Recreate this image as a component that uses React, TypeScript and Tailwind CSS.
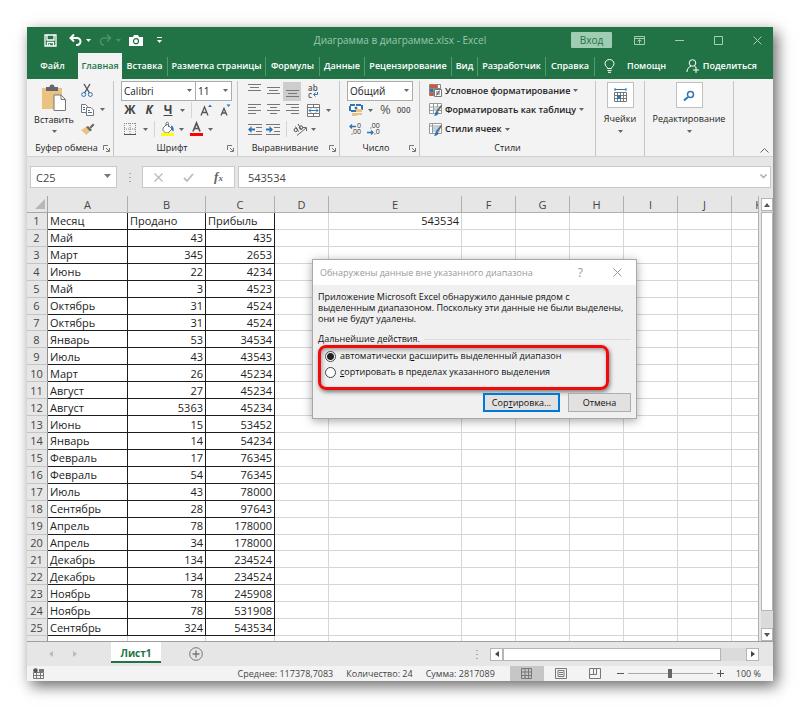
import type { ReactNode } from "react"

const tabs = [
  { name: "Вставка", width: "w-[46px]" },
  { name: "Разметка страницы", width: "w-[98px]" },
  { name: "Формулы", width: "w-[54px]" },
  { name: "Данные", width: "w-[45px]" },
  { name: "Рецензирование", width: "w-[87px]" },
  { name: "Вид", width: "w-[26px]" },
  { name: "Разработчик", width: "w-[68px]" },
  { name: "Справка", width: "w-[49px]" },
]

const rows = [
  ["Месяц", "Продано", "Прибыль"],
  ["Май", "43", "435"],
  ["Март", "345", "2653"],
  ["Июнь", "22", "4234"],
  ["Май", "3", "4523"],
  ["Октябрь", "31", "4524"],
  ["Октябрь", "31", "4524"],
  ["Январь", "53", "34534"],
  ["Июль", "43", "43543"],
  ["Март", "26", "45234"],
  ["Август", "27", "45234"],
  ["Август", "5363", "45234"],
  ["Июнь", "15", "53452"],
  ["Январь", "14", "54234"],
  ["Февраль", "17", "76345"],
  ["Февраль", "54", "76345"],
  ["Июль", "43", "78000"],
  ["Сентябрь", "28", "97643"],
  ["Апрель", "78", "178000"],
  ["Апрель", "34", "178000"],
  ["Декабрь", "134", "234524"],
  ["Декабрь", "134", "234524"],
  ["Ноябрь", "78", "245908"],
  ["Ноябрь", "78", "531908"],
  ["Сентябрь", "324", "543534"],
]

const columns = [
  { name: "A", width: "w-[80px]" },
  { name: "B", width: "w-[78px]" },
  { name: "C", width: "w-[69px]" },
  { name: "D", width: "w-[54px]" },
  { name: "E", width: "w-[133px]" },
  { name: "F", width: "w-[54px]" },
  { name: "G", width: "w-[54px]" },
  { name: "H", width: "w-[54px]" },
  { name: "I", width: "w-[54px]" },
  { name: "J", width: "w-[54px]" },
  { name: "K", width: "w-[54px]" },
]

const emptyColumns = ["F", "G", "H", "I", "J", "K"]

function Svg({ w, h, children }: { w: number; h: number; children: ReactNode }) {
  return (
    <svg width={w} height={h} viewBox={`0 0 ${w} ${h}`} fill="none" className="shrink-0 overflow-visible" aria-hidden="true">
      {children}
    </svg>
  )
}

function Caret({ color = "#666" }: { color?: string }) {
  return (
    <Svg w={5} h={3}>
      <path d="M0 0h5L2.5 3z" fill={color} />
    </Svg>
  )
}

function IconButton({ label, className = "", children }: { label: string; className?: string; children: ReactNode }) {
  return (
    <button type="button" aria-label={label} className={`flex shrink-0 items-center justify-center ${className}`}>
      {children}
    </button>
  )
}

function Lines({ widths, align }: { widths: number[]; align: "start" | "center" | "end" }) {
  return (
    <Svg w={13} h={widths.length * 3}>
      {widths.map((w, i) => {
        const x = align === "start" ? 0 : align === "end" ? 13 - w : (13 - w) / 2
        return <rect key={i} x={x} y={i * 3} width={w} height={1} fill="#777" />
      })}
    </Svg>
  )
}

function Indent({ flip = false }: { flip?: boolean }) {
  return (
    <Svg w={14} h={11}>
      <path d="M0 .5h14M8 3.5h6M8 7.5h6M0 10.5h14" stroke="#777" />
      <path
        d={flip ? "M7 5.5 3.5 2v2.500H0v2h3.5V9z" : "M0 5.5 3.500 2v2.500H7v2H3.500V9z"}
        fill="#2e75b6"
      />
    </Svg>
  )
}

function Group({ title, className, launcher = true, children }: { title: string; className: string; launcher?: boolean; children: ReactNode }) {
  return (
    <section aria-label={title} className={`flex flex-col border-r border-[#c6c6c6] ${className}`}>
      <div className="h-[60px]">{children}</div>
      <div className="flex h-4 items-center pr-[3px] pl-[3px]">
        <span className="flex-1 text-center whitespace-nowrap">{title}</span>
        {launcher && (
          <IconButton label={`${title}: параметры`}>
            <Svg w={7} h={7}>
              <path d="M.5 5V.5H5M3 3l3 3M6.500 3v3.500H3" stroke="#777" />
            </Svg>
          </IconButton>
        )}
      </div>
    </section>
  )
}

function TitleBar() {
  return (
    <div className="grid h-[26px] grid-cols-[1fr_auto_1fr] items-center">
      <div className="flex items-center pl-[17px]">
        <IconButton label="Сохранить" className="mr-3">
          <Svg w={13} h={13}>
            <path d="M1 1h11v11H1zM3 1v5h7V1M3.500 12V8.500h6V12M5.500 10v2" stroke="#fff" strokeWidth="1.300" />
          </Svg>
        </IconButton>
        <IconButton label="Отменить" className="mr-[5px]">
          <Svg w={12} h={12}>
            <path d="M1.500 4H8a3.500 3.500 0 0 1 0 7H7M5 .5 1.500 4 5 7.500" stroke="#fff" strokeWidth="2" />
          </Svg>
        </IconButton>
        <Caret color="#fff" />
        <IconButton label="Вернуть" className="mr-[4px] ml-2">
          <Svg w={13} h={12}>
            <path d="M11.500 4H5a3.500 3.500 0 0 0 0 7M8 .5 11.500 4 8 7.500" stroke="#4d9169" strokeWidth="1.500" />
          </Svg>
        </IconButton>
        <Caret color="#4d9169" />
        <IconButton label="Снимок" className="ml-2">
          <Svg w={14} h={11}>
            <path d="M0 2h4l1-2h4l1 2h4v9H0z" fill="#fff" />
            <circle cx="7" cy="6.200" r="2.500" stroke="#217346" strokeWidth="1.200" />
          </Svg>
        </IconButton>
        <IconButton label="Настройка панели" className="ml-[14px]">
          <Svg w={5} h={6}>
            <path d="M0 .5h5" stroke="#fff" />
            <path d="M0 3h5L2.500 6z" fill="#fff" />
          </Svg>
        </IconButton>
      </div>
      <h1 className="text-[10px] whitespace-pre text-[#9bc7ae]">Диаграмма в диаграмме.xlsx - Excel</h1>
      <div className="flex items-center justify-end pr-[11px]">
        <button type="button" className="mr-[22px] h-4 w-[41px] rounded-[1px] bg-[#9fcdb3] text-[10px] leading-4 text-[#217346]">
          Вход
        </button>
        <IconButton label="Параметры ленты" className="mr-[30px]">
          <Svg w={11} h={9}>
            <path d="M.5.5h10v8H.5zM.5 2.500h10M5.500 7.500V4M3.500 5.500l2-2 2 2" stroke="#a6cfb7" />
          </Svg>
        </IconButton>
        <IconButton label="Свернуть" className="mr-[30px]">
          <Svg w={9} h={9}>
            <path d="M0 4.500h9" stroke="#a6cfb7" />
          </Svg>
        </IconButton>
        <IconButton label="Развернуть" className="mr-[30px]">
          <Svg w={9} h={9}>
            <path d="M.5.5h8v8h-8z" stroke="#a6cfb7" />
          </Svg>
        </IconButton>
        <IconButton label="Закрыть">
          <Svg w={9} h={9}>
            <path d="m.5.5 8 8m0-8-8 8" stroke="#a6cfb7" />
          </Svg>
        </IconButton>
      </div>
    </div>
  )
}

function TabBar() {
  return (
    <nav className="flex h-[26px] items-center text-[9px] font-semibold whitespace-nowrap text-white">
      <button type="button" className="h-full w-[51px]">
        Файл
      </button>
      <button type="button" className="h-full w-[44px] bg-[#f3f3f3] text-[#217346]">
        Главная
      </button>
      {tabs.map((tab) => (
        <button key={tab.name} type="button" className={`flex h-[19px] shrink-0 items-center justify-center border-r border-[#4f9a70] ${tab.width}`}>
          {tab.name}
        </button>
      ))}
      <button type="button" className="ml-[9px] flex items-center gap-3">
        <Svg w={11} h={14}>
          <path d="M3.500 9.500C3.500 8 1 7 1 4.700a4.500 4.200 0 0 1 9 0C10 7 7.500 8 7.500 9.500zM3.500 11.500h4M4 13.300h3" stroke="#fff" />
        </Svg>
        Помощн
      </button>
      <button type="button" className="ml-auto flex items-center gap-[3px] pr-4">
        <Svg w={14} h={14}>
          <circle cx="6.500" cy="4" r="3.300" stroke="#fff" />
          <path d="M1 13c0-3 1.500-5 4-5.700M8.500 7.300l1.500 1M7 11h6M10 8v6" stroke="#fff" />
        </Svg>
        Поделиться
      </button>
    </nav>
  )
}

function Ribbon() {
  return (
    <div className="flex h-[78px] border-b border-[#d2d2d2] bg-[#f3f3f3] pt-[2px] text-[9px] font-medium text-[#222]">
      <Group title="Буфер обмена" className="w-[87px]">
        <div className="flex">
          <button type="button" className="flex w-[54px] flex-col items-center pt-1">
            <Svg w={24} h={26}>
              <path d="M0 3h20v21H0z" fill="#eac282" />
              <path d="M4 2h3.500a2.500 2.500 0 0 1 5 0H16v4H4z" fill="#666" />
              <path d="M12 10h7l4.500 4.500V25.500H12z" fill="#fff" stroke="#777" />
              <path d="M19 10v4.500h4.500" stroke="#777" />
            </Svg>
            <span className="mt-[3px] leading-3">Вставить</span>
            <span className="mt-1">
              <Caret />
            </span>
          </button>
          <div className="flex flex-col">
            <IconButton label="Вырезать" className="h-[19px] w-[12px]">
              <Svg w={12} h={13}>
                <path d="M3 0l5.500 9M9 0 3.500 9" stroke="#555" strokeWidth="1.400" />
                <circle cx="2.700" cy="10.500" r="2" stroke="#2e75b6" />
                <circle cx="9.300" cy="10.500" r="2" stroke="#2e75b6" />
              </Svg>
            </IconButton>
            <IconButton label="Копировать" className="h-[19px] gap-[6px]">
              <Svg w={13} h={12}>
                <path d="M.5.5h4l2 2v6h-6z" fill="#fff" stroke="#777" />
                <path d="M5.500 3.500h4.500l2.500 2.500v5.500h-7z" fill="#fff" stroke="#777" />
                <path d="M7 6.500h2M7 8.500h4M2 3.500h2M2 5.500h2" stroke="#2e75b6" />
              </Svg>
              <Caret />
            </IconButton>
            <IconButton label="Формат по образцу" className="h-[19px] w-[14px]">
              <Svg w={14} h={12}>
                <path d="m0 7 5-3 4 4-3.500 4z" fill="#eac282" />
                <path d="m5 4 2-1 4 4-2 1.500zM8.500 4 12 .5 13.500 2 10 5.500z" fill="#666" />
              </Svg>
            </IconButton>
          </div>
        </div>
      </Group>

      <Group title="Шрифт" className="w-[124px]">
        <div className="flex h-[20px] pl-[7px] text-[10px]">
          <div className="relative">
            <select aria-label="Шрифт" className="h-5 w-[75px] appearance-none border border-[#ababab] bg-white pl-[2px] leading-4">
              <option>Calibri</option>
            </select>
            <span className="pointer-events-none absolute top-2 right-1">
              <Caret />
            </span>
          </div>
          <div className="relative -ml-px">
            <select aria-label="Размер шрифта" className="h-5 w-[37px] appearance-none border border-[#ababab] bg-white pl-[2px] leading-4">
              <option>11</option>
            </select>
            <span className="pointer-events-none absolute top-2 right-1">
              <Caret />
            </span>
          </div>
        </div>
        <div className="flex h-[18px] items-center pl-[10px] font-bold text-[#444]">
          <button type="button" className="w-3 text-[12px]">Ж</button>
          <button type="button" className="ml-2 w-[10px] text-[12px] italic">К</button>
          <button type="button" className="ml-2 w-3 text-[12px] underline">Ч</button>
          <span className="ml-[6px]">
            <Caret />
          </span>
          <span className="ml-[6px] h-4 w-px bg-[#d4d4d4]" />
          <IconButton label="Увеличить размер" className="ml-2">
            <Svg w={12} h={12}>
              <path d="M1 11.500 4.500 3 8 11.500M2 8.500h5" stroke="#555" strokeWidth="1.300" />
              <path d="m8 3 2-2.500L12 3z" fill="#2e75b6" />
            </Svg>
          </IconButton>
          <IconButton label="Уменьшить размер" className="ml-2">
            <Svg w={11} h={12}>
              <path d="M1 11.500 4 4.500l3 7M2 9h4" stroke="#555" strokeWidth="1.300" />
              <path d="m6.500.5h4L8.500 3z" fill="#2e75b6" />
            </Svg>
          </IconButton>
        </div>
        <div className="flex h-5 items-center pl-[10px]">
          <IconButton label="Границы" className="gap-[7px]">
            <Svg w={12} h={12}>
              <path d="M.5 0v11M6 0v11M11.500 0v11M0 .5h12M0 6h12" stroke="#888" strokeDasharray="1 1" />
              <path d="M0 11.500h12" stroke="#555" />
            </Svg>
            <Caret />
          </IconButton>
          <span className="ml-[6px] h-4 w-px bg-[#d4d4d4]" />
          <IconButton label="Цвет заливки" className="ml-[6px] gap-[5px]">
            <Svg w={13} h={14}>
              <path d="m2 6 4-4 5 5-4 4H4.500L2 8.500zM5 4V1.500a1.200 1.200 0 0 1 2.500 0V5" fill="#fff" stroke="#777" />
              <path d="M10 3.500c2 .5 3 2 2.500 6L10.500 8z" fill="#2e75b6" />
              <path d="M0 11h13v3H0z" fill="#ff0" />
            </Svg>
            <Caret />
          </IconButton>
          <IconButton label="Цвет текста" className="ml-[6px] gap-[5px]">
            <Svg w={13} h={14}>
              <path d="M3 9.500 6.500 1 10 9.500M4.200 6.500h4.600" stroke="#555" strokeWidth="1.700" />
              <path d="M0 11h13v3H0z" fill="#f00" />
            </Svg>
            <Caret />
          </IconButton>
        </div>
      </Group>

      <Group title="Выравнивание" className="w-[102px]">
        <div className="flex h-[20px] items-center pl-[10px]">
          <IconButton label="По верхнему краю" className="mb-[6px]">
            <Lines widths={[13, 9, 13]} align="center" />
          </IconButton>
          <IconButton label="По середине" className="ml-[6px]">
            <Lines widths={[13, 9, 13]} align="center" />
          </IconButton>
          <IconButton label="По нижнему краю" className="ml-[3px] h-[19px] w-[18px] bg-[#cdcdcd] pt-[6px]">
            <Lines widths={[13, 9, 13]} align="center" />
          </IconButton>
          <button type="button" aria-label="Перенести текст" className="ml-[7px] flex flex-col items-start text-[8px] leading-[7px] font-semibold text-[#555]">
            <span>ab</span>
            <span className="flex items-center gap-px">
              c
              <Svg w={5} h={5}>
                <path d="M4.500 0v2.500H1M2.500.5l-2 2 2 2" stroke="#2e75b6" />
              </Svg>
            </span>
          </button>
        </div>
        <div className="flex h-[18px] items-center pl-[10px]">
          <IconButton label="По левому краю">
            <Lines widths={[13, 8, 13, 8]} align="start" />
          </IconButton>
          <IconButton label="По центру" className="ml-[6px]">
            <Lines widths={[13, 7, 13, 7]} align="center" />
          </IconButton>
          <IconButton label="По правому краю" className="ml-[6px]">
            <Lines widths={[13, 8, 13, 8]} align="end" />
          </IconButton>
          <IconButton label="Объединить" className="ml-2 gap-[6px]">
            <Svg w={13} h={13}>
              <path d="M.5.5h12v12H.5zM.5 3.500h12M.5 9.500h12M6.500.5v3M6.500 9.500v3" fill="#fff" stroke="#777" />
              <path d="M2 6.500h9M4 4.500l-2 2 2 2M9 4.500l2 2-2 2" stroke="#2e75b6" />
            </Svg>
            <Caret />
          </IconButton>
        </div>
        <div className="flex h-5 items-center pl-[10px]">
          <IconButton label="Уменьшить отступ">
            <Indent />
          </IconButton>
          <IconButton label="Увеличить отступ" className="ml-1">
            <Indent flip />
          </IconButton>
          <span className="ml-[6px] h-4 w-px bg-[#d4d4d4]" />
          <IconButton label="Ориентация" className="ml-[6px] gap-1">
            <Svg w={14} h={13}>
              <circle cx="2.800" cy="7" r="1.700" stroke="#555" />
              <path d="M2.500 3.500 5.500 8.500M5 1l3.500 6" stroke="#555" />
              <circle cx="8" cy="4.500" r="1.700" stroke="#555" />
              <path d="M4 12.500 13 5M9.500 4.500h4V8" stroke="#666" />
            </Svg>
            <Caret />
          </IconButton>
        </div>
      </Group>

      <Group title="Число" className="w-[80px]">
        <div className="relative ml-[7px] h-5 w-[66px] text-[10px]">
          <select aria-label="Числовой формат" className="h-5 w-full appearance-none border border-[#ababab] bg-white pl-[2px] leading-4">
            <option>Общий</option>
          </select>
          <span className="pointer-events-none absolute top-2 right-1">
            <Caret />
          </span>
        </div>
        <div className="flex h-[18px] items-center pl-[9px]">
          <IconButton label="Финансовый формат" className="gap-[5px]">
            <Svg w={14} h={13}>
              <path d="M1 1h12v6H1z" fill="#fff" stroke="#2e75b6" strokeWidth="2" strokeDasharray="5 1" />
              <circle cx="7" cy="4" r="1.500" fill="#2e75b6" />
              <path d="M7 5h6v3H7zM7 9h6v2H7zM3 9h5v3H3z" fill="#eac282" />
            </Svg>
            <Caret />
          </IconButton>
          <button type="button" className="ml-[7px] text-[13px] text-[#555]">%</button>
          <button type="button" className="ml-[6px] text-[8px] font-semibold text-[#555]">000</button>
        </div>
        <div className="flex h-5 items-center gap-[6px] pl-[9px] text-[7px] leading-[6px] text-[#333]">
          <button type="button" aria-label="Увеличить разрядность" className="flex flex-col items-end">
            <span className="flex items-center gap-px">
              <Svg w={7} h={5}>
                <path d="M1 2.500h6M3 .5l-2 2 2 2" stroke="#2e75b6" strokeWidth="1.300" />
              </Svg>
              0
            </span>
            <span>,00</span>
          </button>
          <button type="button" aria-label="Уменьшить разрядность" className="flex flex-col items-end">
            <span>,00</span>
            <span className="flex items-center">
              <Svg w={7} h={5}>
                <path d="M0 2.500h6M4 .5l2 2-2 2" stroke="#2e75b6" strokeWidth="1.300" />
              </Svg>
              ,0
            </span>
          </button>
        </div>
      </Group>

      <Group title="Стили" className="w-[176px]" launcher={false}>
        <div className="flex flex-col pl-[9px]">
          <button type="button" className="flex h-[19px] items-center gap-[3px] whitespace-nowrap">
            <Svg w={13} h={13}>
              <path d="M.5.5h11v11H.5zM.5 4.500h11M.5 8.500h5M4.500.5v11M8.500.5v4" fill="#fff" stroke="#888" />
              <path d="M1 1h7v3H1zM1 9h3v3H1z" fill="#d65532" />
              <path d="M1 5h3v3H1z" fill="#2e75b6" />
              <path d="M5.500 5.500h7v7h-7z" fill="#fff" stroke="#777" />
              <path d="M7 8h4M7 10h4M10.500 6.500l-3 5" stroke="#444" strokeWidth=".8" />
            </Svg>
            <span className="font-semibold">Условное форматирование</span>
            <Caret />
          </button>
          <button type="button" className="flex h-[19px] items-center gap-[3px] whitespace-nowrap">
            <Svg w={13} h={13}>
              <path d="M.5.5h12v10H.5zM.5 4h12M.5 7.500h12M4.500.5v10M8.500.5v10" fill="#fff" stroke="#999" />
              <path d="M5 4h4v4H5z" fill="#b9d3ea" />
              <path d="m12 2 1 1-4 6-2-1z" fill="#666" />
              <path d="m7 8 3 2c-1 2-3 3-5 3 1-1 1-3 2-5z" fill="#2e75b6" />
            </Svg>
            <span className="font-semibold">Форматировать как таблицу</span>
            <Caret />
          </button>
          <button type="button" className="flex h-5 items-center gap-[3px] whitespace-nowrap">
            <Svg w={13} h={13}>
              <path d="M.5.5h12v10H.5zM.5 3h12M3.500.5v10" fill="#fff" stroke="#999" />
              <path d="M4 4h7v5H4z" fill="#b9d3ea" />
              <path d="m12 2 1 1-4 6-2-1z" fill="#666" />
              <path d="m7 8 3 2c-1 2-3 3-5 3 1-1 1-3 2-5z" fill="#2e75b6" />
            </Svg>
            <span className="font-semibold">Стили ячеек</span>
            <Caret />
          </button>
        </div>
      </Group>

      <div className="flex w-[49px] flex-col items-center border-r border-[#c6c6c6] pt-px">
        <button type="button" className="flex flex-col items-center">
          <span className="flex h-[26px] w-[27px] items-center justify-center border border-[#c0c0c0] bg-white">
            <Svg w={13} h={14}>
              <path d="M1 0v3M12 0v3M1 1.500h11" stroke="#2e75b6" />
              <path d="M.5 4.500h12v9H.5zM.5 7.500h12M.5 10.500h12M3.500 4.500v9M6.500 4.500v9M9.500 4.500v9" stroke="#777" />
              <path d="M3 7h4v4H3z" fill="#2e75b6" />
            </Svg>
          </span>
          <span className="mt-[5px] mb-[5px] leading-3">Ячейки</span>
          <Caret />
        </button>
      </div>
      <div className="flex w-[89px] flex-col items-center border-r border-[#c6c6c6] pt-px">
        <button type="button" className="flex flex-col items-center">
          <span className="flex h-[26px] w-[27px] items-center justify-center border border-[#c0c0c0] bg-white">
            <Svg w={12} h={11}>
              <circle cx="7.500" cy="4.500" r="3" stroke="#2e75b6" strokeWidth="1.500" />
              <path d="M5 7 1 10.500" stroke="#2e75b6" strokeWidth="2" />
            </Svg>
          </span>
          <span className="mt-[5px] mb-[5px] leading-3">Редактирование</span>
          <Caret />
        </button>
      </div>
      <IconButton label="Свернуть ленту" className="mt-auto mr-1 mb-[3px] ml-auto">
        <Svg w={9} h={5}>
          <path d="M.5 4.500l4-4 4 4" stroke="#666" />
        </Svg>
      </IconButton>
    </div>
  )
}

function FormulaBar() {
  return (
    <div className="flex h-[39px] shrink-0 items-start gap-1 pt-[9px] pr-[2px] pl-[3px] text-[11px] text-[#444]">
      <div className="relative">
        <input aria-label="Имя" defaultValue="C25" className="h-[22px] w-[87px] border border-[#c9c9c9] bg-white pl-[5px]" />
        <span className="pointer-events-none absolute top-2 right-[6px]">
          <Svg w={7} h={4}>
            <path d="M0 0h7L3.500 4z" fill="#777" />
          </Svg>
        </span>
      </div>
      <span className="flex h-[22px] w-[17px] items-center justify-center">
        <Svg w={2} h={9}>
          <path d="M0 0h2v1H0zM0 4h2v1H0zM0 8h2v1H0z" fill="#aaa" />
        </Svg>
      </span>
      <div className="flex h-[22px] w-[93px] items-center justify-around border border-[#c9c9c9] bg-white px-px">
        <IconButton label="Отмена ввода">
          <Svg w={9} h={9}>
            <path d="m.5.5 8 8m0-8-8 8" stroke="#bbb" strokeWidth="1.300" />
          </Svg>
        </IconButton>
        <IconButton label="Ввод">
          <Svg w={11} h={9}>
            <path d="m1 5 3 3 6-7" stroke="#bbb" strokeWidth="1.800" />
          </Svg>
        </IconButton>
        <button type="button" className="font-['Liberation_Serif',serif] text-[13px] leading-4 font-bold text-[#666] italic">
          f<span className="text-[9px]">x</span>
        </button>
      </div>
      <div className="relative -ml-px flex-1">
        <input aria-label="Строка формул" defaultValue="543534" className="h-[22px] w-full border border-[#c9c9c9] bg-white pl-[9px]" />
        <span className="pointer-events-none absolute top-2 right-1">
          <Svg w={7} h={5}>
            <path d="m.5.5 3 3 3-3" stroke="#aaa" strokeWidth="1.500" />
          </Svg>
        </span>
      </div>
    </div>
  )
}

function Sheet() {
  const dataCell = "border-r border-b border-[#1c1c1c] p-0 px-[2px]"
  const emptyCell = "border-r border-b border-[#d6d6d6] p-0"
  return (
    <div className="flex min-h-0 flex-1 border-b border-[#a0a0a0]">
      <div className="min-w-0 flex-1 overflow-hidden border-r border-[#b0b0b0]">
        <table className="h-[456px] w-[759px] table-fixed border-separate border-spacing-0 bg-white text-[11px] leading-[15px] text-[#222]">
          <thead className="bg-[#e6e6e6] text-[#444]">
            <tr className="h-[17px]">
              <th className="w-[21px] border-r border-b border-[#a6a6a6] p-0">
                <span className="flex justify-end pr-[2px]">
                  <Svg w={10} h={10}>
                    <path d="M10 0v10H0z" fill="#b7b7b7" />
                  </Svg>
                </span>
              </th>
              {columns.map((col) => (
                <th key={col.name} scope="col" className={`border-r border-b border-[#b0b0b0] p-0 font-normal ${col.width}`}>
                  {col.name}
                </th>
              ))}
            </tr>
          </thead>
          <tbody>
            {rows.map(([month, sold, profit], i) => (
              <tr key={i}>
                <th scope="row" className="border-r border-b border-[#c4c4c4] border-r-[#8e8e8e] bg-[#e6e6e6] p-0 pr-px font-normal text-[#444]">
                  {i + 1}
                </th>
                <td className={dataCell}>{month}</td>
                <td className={`${dataCell} ${i > 0 ? "text-right" : ""}`}>{sold}</td>
                <td className={`${dataCell} ${i > 0 ? "text-right" : ""}`}>{profit}</td>
                <td className={emptyCell} />
                <td className={`${emptyCell} pr-[2px] text-right`}>{i === 0 ? "543534" : ""}</td>
                {emptyColumns.map((name) => (
                  <td key={name} className={emptyCell} />
                ))}
              </tr>
            ))}
            <tr>
              <th scope="row" className="border-r border-[#8e8e8e] bg-[#e6e6e6] p-0 pr-px font-normal text-[#444]">
                26
              </th>
              {columns.map((col) => (
                <td key={col.name} className="border-r border-[#d6d6d6] p-0" />
              ))}
            </tr>
          </tbody>
        </table>
      </div>
      <div className="mt-[2px] ml-[2px] flex w-[12px] flex-col bg-[#d9dcdb]">
        <IconButton label="Вверх" className="h-[13px] border border-[#b5b5b5] bg-white">
          <Svg w={6} h={4}>
            <path d="M0 4h6L3 0z" fill="#555" />
          </Svg>
        </IconButton>
        <div className="mt-px mb-[17px] flex-1 border border-[#b5b5b5] bg-white" />
        <IconButton label="Вниз" className="h-[13px] border border-[#b5b5b5] bg-white">
          <Svg w={6} h={4}>
            <path d="M0 0h6L3 4z" fill="#555" />
          </Svg>
        </IconButton>
      </div>
    </div>
  )
}

function SheetTabs() {
  return (
    <div className="flex h-6 shrink-0 items-center pr-[14px] pl-[22px]">
      <IconButton label="Предыдущий лист" className="mr-[20px]">
        <Svg w={4} h={6}>
          <path d="M4 0v6L0 3z" fill="#bbb" />
        </Svg>
      </IconButton>
      <IconButton label="Следующий лист" className="mr-[34px]">
        <Svg w={4} h={6}>
          <path d="M0 0v6l4-3z" fill="#bbb" />
        </Svg>
      </IconButton>
      <button type="button" className="mb-[3px] h-[21px] w-[50px] border-b-2 border-[#217346] bg-white pt-[2px] text-[10px] leading-4 font-bold text-[#217346]">
        Лист1
      </button>
      <IconButton label="Новый лист" className="ml-7">
        <Svg w={14} h={14}>
          <circle cx="7" cy="7" r="6.300" stroke="#777" />
          <path d="M7 3.500v7M3.500 7h7" stroke="#777" strokeWidth="1.400" />
        </Svg>
      </IconButton>
      <span className="mr-3 ml-auto">
        <Svg w={2} h={9}>
          <path d="M0 0h2v1H0zM0 4h2v1H0zM0 8h2v1H0z" fill="#aaa" />
        </Svg>
      </span>
      <div className="flex h-[13px] w-[269px] bg-[#d9dcdb]">
        <IconButton label="Влево" className="w-[13px] border border-[#b5b5b5] bg-white">
          <Svg w={4} h={6}>
            <path d="M4 0v6L0 3z" fill="#444" />
          </Svg>
        </IconButton>
        <div className="mr-[25px] flex-1 border border-[#b5b5b5] bg-white" />
        <IconButton label="Вправо" className="w-[13px] border border-[#b5b5b5] bg-white">
          <Svg w={4} h={6}>
            <path d="M0 0v6l4-3z" fill="#444" />
          </Svg>
        </IconButton>
      </div>
    </div>
  )
}

function StatusBar() {
  return (
    <footer className="flex h-[15px] shrink-0 items-center bg-[#f3f3f3] pr-[12px] pl-[6px] text-[9px] font-medium whitespace-nowrap text-[#444]">
      <IconButton label="Запись макроса">
        <Svg w={11} h={11}>
          <path d="M.5 4.500h10v6H.5zM.5 7.500h10M3.500 5v5M7.500 5v5" stroke="#777" />
          <circle cx="2.500" cy="2.500" r="2.300" fill="#555" />
          <path d="M6 1h5v3H6z" fill="#777" />
        </Svg>
      </IconButton>
      <div className="mr-[15px] ml-auto flex gap-[13px]">
        <span>Среднее: 117378,7083</span>
        <span>Количество: 24</span>
        <span>Сумма: 2817089</span>
      </div>
      <IconButton label="Обычный" className="h-full w-[34px] bg-[#c6c6c6]">
        <Svg w={11} h={11}>
          <path d="M.5.5h10v10H.5zM.5 4h10M.5 7.500h10M4 .5v10M7.500.5v10" stroke="#777" />
        </Svg>
      </IconButton>
      <IconButton label="Разметка страницы" className="ml-[11px]">
        <Svg w={12} h={11}>
          <path d="M.5.5h11v10H.5zM3 2.500h6v6H3zM4 4.500h4M4 6.500h4" stroke="#777" />
        </Svg>
      </IconButton>
      <IconButton label="Страничный режим" className="ml-[22px]">
        <Svg w={12} h={11}>
          <path d="M.5.5h11v10H.5zM4.500.5v6M.5 6.500h7v-6" stroke="#777" />
        </Svg>
      </IconButton>
      <IconButton label="Уменьшить" className="mr-1 ml-4">
        <Svg w={7} h={7}>
          <path d="M0 3.500h7" stroke="#555" />
        </Svg>
      </IconButton>
      <input
        type="range"
        aria-label="Масштаб"
        defaultValue="50"
        className="h-[9px] w-[85px] appearance-none bg-[linear-gradient(#aaa,#aaa)] bg-[length:100%_1px] bg-center bg-no-repeat [&::-webkit-slider-thumb]:h-[9px] [&::-webkit-slider-thumb]:w-1 [&::-webkit-slider-thumb]:appearance-none [&::-webkit-slider-thumb]:bg-[#666]"
      />
      <IconButton label="Увеличить" className="mr-3 ml-1">
        <Svg w={7} h={7}>
          <path d="M0 3.500h7M3.500 0v7" stroke="#555" />
        </Svg>
      </IconButton>
      <span>100 %</span>
    </footer>
  )
}

function SortDialog() {
  return (
    <div role="dialog" aria-labelledby="dialog-title" className="absolute top-[232px] left-[285px] w-[325px] border border-[#a8a8a8] bg-[#f0f0f0] text-[9px] font-medium text-[#111] shadow-[0_2px_9px_rgba(0,0,0,0.35)]">
      <div className="flex h-[25px] items-center bg-white pr-[14px] pl-[7px] text-[#999]">
        <h2 id="dialog-title" className="text-[9px] font-medium">Обнаружены данные вне указанного диапазона</h2>
        <button type="button" aria-label="Справка" className="mr-[30px] ml-auto text-[12px]">?</button>
        <IconButton label="Закрыть окно">
          <Svg w={9} h={9}>
            <path d="m.5.5 8 8m0-8-8 8" stroke="#999" />
          </Svg>
        </IconButton>
      </div>
      <div className="px-[5px] py-[6px]">
        <p className="leading-[11px] whitespace-nowrap">
          Приложение Microsoft Excel обнаружило данные рядом с
          <br />
          выделенным диапазоном. Поскольку эти данные не были выделены,
          <br />
          они не будут удалены.
        </p>
        <fieldset className="mt-[9px]">
          <legend className="flex w-full items-center gap-1 leading-3 after:h-px after:flex-1 after:bg-[#dcdcdc]">Дальнейшие действия.</legend>
          <div className="mr-[22px] h-[45px] rounded-[8px] border-[3px] border-[#f00b0b] px-1 shadow-[1px_2px_4px_rgba(0,0,0,0.5),inset_1px_2px_4px_rgba(0,0,0,0.35)]">
            <label className="flex h-4 items-center gap-1">
              <input type="radio" name="range" defaultChecked className="size-[11px] appearance-none rounded-full border border-[#444] bg-white checked:bg-[radial-gradient(circle,#222_3px,#fff_4px)]" />
              <span>автоматически <u>р</u>асширить выделенный диапазон</span>
            </label>
            <label className="flex h-4 items-center gap-1">
              <input type="radio" name="range" className="size-[11px] appearance-none rounded-full border border-[#444] bg-white checked:bg-[radial-gradient(circle,#222_3px,#fff_4px)]" />
              <span><u>с</u>ортировать в пределах указанного выделения</span>
            </label>
          </div>
        </fieldset>
        <div className="mt-[3px] flex justify-end gap-2">
          <button type="button" className="h-[19px] w-[77px] border-2 border-[#0078d7] bg-[#e1e1e1]">
            Сор<u>т</u>ировка...
          </button>
          <button type="button" className="h-[19px] w-[63px] border border-[#adadad] bg-[#e1e1e1]">
            Отмена
          </button>
        </div>
      </div>
    </div>
  )
}

export default function App() {
  return (
    <div className="h-screen bg-white p-[27px] font-['Open_Sans','Noto_Sans',sans-serif]">
      <main className="relative flex h-full flex-col bg-[#e6e6e6] shadow-[4px_5px_14px_rgba(0,0,0,0.6)]">
        <header className="shrink-0 bg-[#217346]">
          <TitleBar />
          <TabBar />
          <Ribbon />
        </header>
        <FormulaBar />
        <Sheet />
        <SheetTabs />
        <StatusBar />
        <SortDialog />
      </main>
    </div>
  )
}
